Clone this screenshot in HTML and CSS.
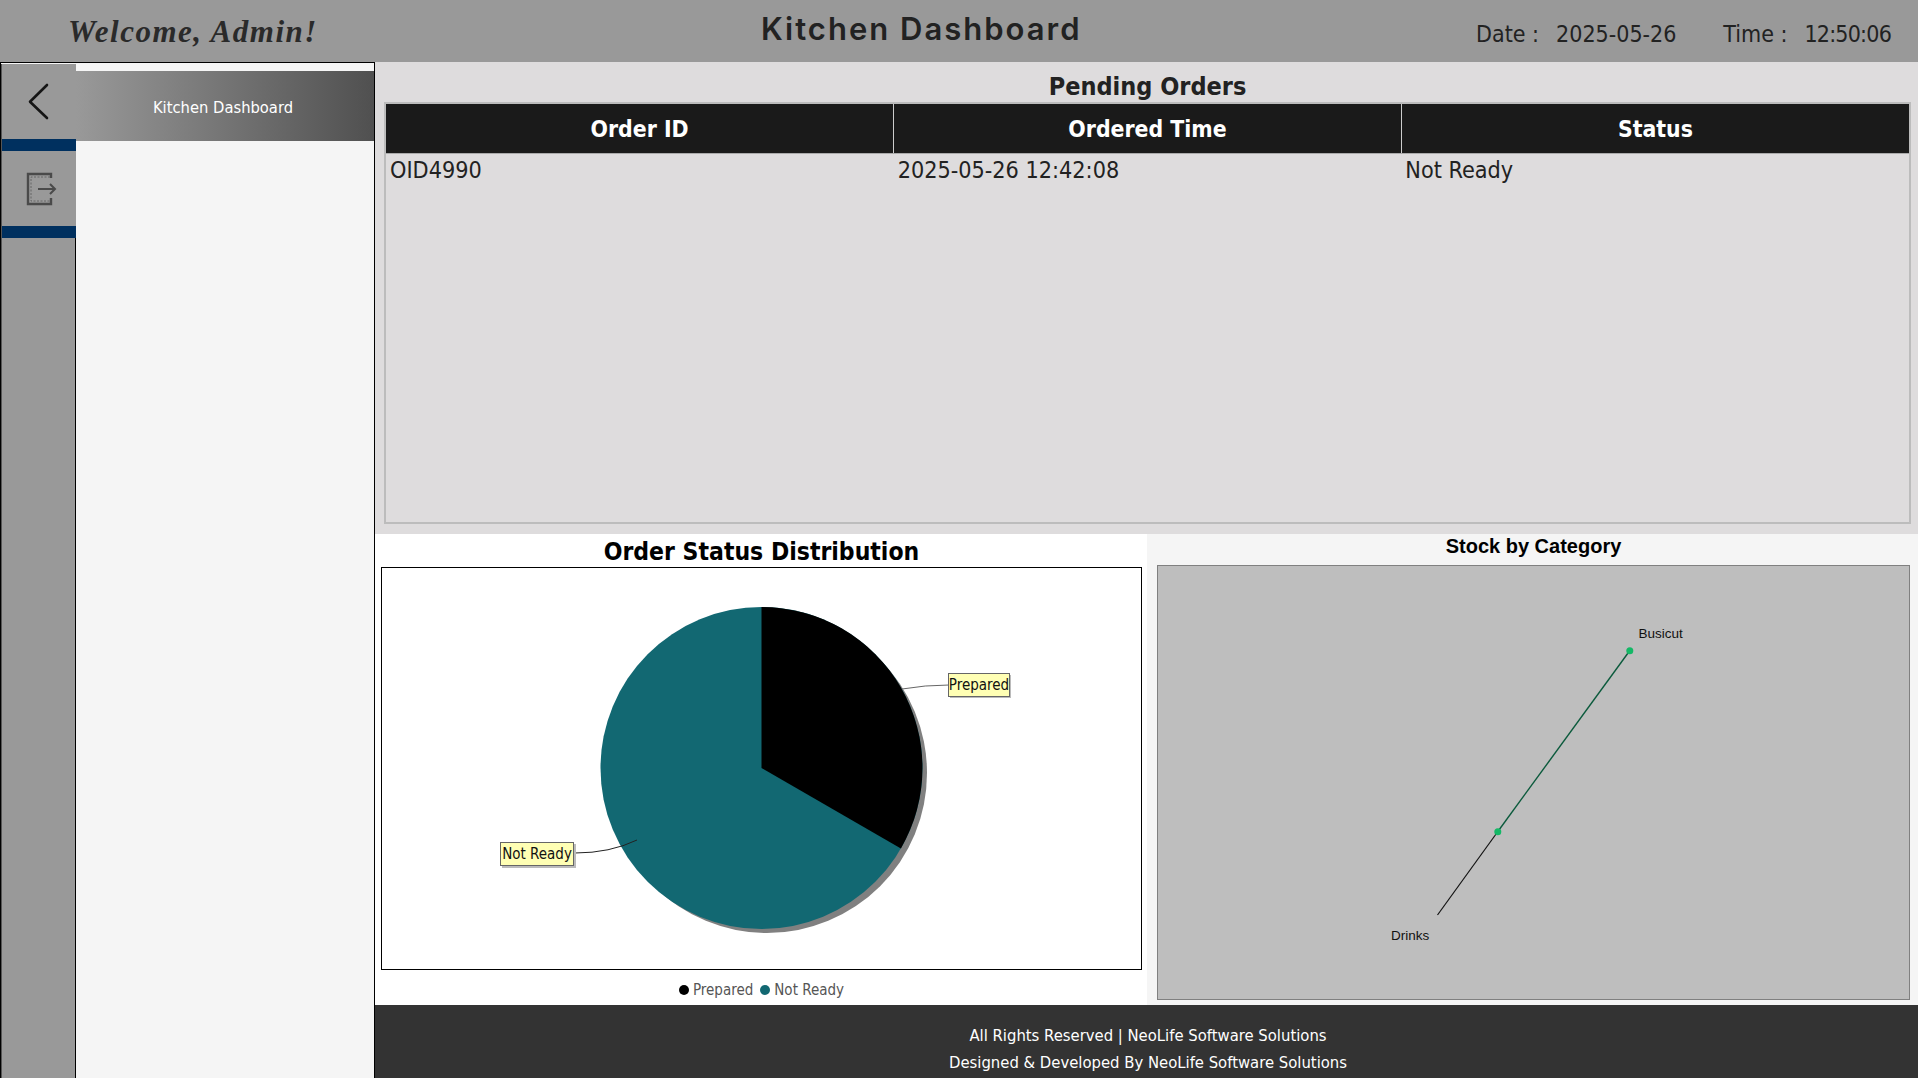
FILE: index.html
```html
<!DOCTYPE html>
<html lang="en">
<head>
    <meta charset="UTF-8">
    <title>Kitchen Dashboard</title>
    <link rel="stylesheet" href="styles.css">
</head>
<body>
    <header class="topbar">
        <div class="welcome">Welcome, Admin!</div>
        <h1 class="page-title">Kitchen Dashboard</h1>
        <div class="clock">
            <span><span class="clock-label">Date :</span>2025-05-26</span>
            <span><span class="clock-label">Time :</span><span class="clock-time">12:50:06</span></span>
        </div>
    </header>
    <div class="layout">
        <aside class="sidebar">
            <div class="rail">
                <div class="rail-btn">
                    <svg width="24" height="40" viewBox="0 0 24 40">
                        <path d="M20 3 L3 19.7 L20 36" fill="none" stroke="#151515" stroke-width="2.6" stroke-linecap="round" stroke-linejoin="round"/>
                    </svg>
                </div>
                <div class="rail-band"></div>
                <div class="rail-btn">
                    <svg class="logout-icon" width="32" height="36" viewBox="0 0 32 36">
                        <path d="M25 7 V3 H2 V33 H25 V27" fill="none" stroke="#4a4a4a" stroke-width="2.4"/>
                        <path d="M24 6 H5 V30 H24" fill="none" stroke="#666" stroke-width="1" stroke-dasharray="2 1.5"/>
                        <path d="M12 18 H29 M24 13 L29 18 L24 23" fill="none" stroke="#4a4a4a" stroke-width="2"/>
                    </svg>
                </div>
                <div class="rail-band"></div>
                <div class="rail-rest"></div>
            </div>
            <nav class="side-menu">
                <a class="side-link">Kitchen Dashboard</a>
            </nav>
        </aside>
        <main class="content">
            <section class="orders">
                <h2 class="orders-title">Pending Orders</h2>
                <div class="table-frame">
                    <table class="orders-table">
                        <thead>
                            <tr><th>Order ID</th><th>Ordered Time</th><th>Status</th></tr>
                        </thead>
                        <tbody>
                            <tr><td>OID4990</td><td>2025-05-26 12:42:08</td><td>Not Ready</td></tr>
                        </tbody>
                    </table>
                </div>
            </section>
            <section class="charts">
                <div class="chart-pie">
                    <h3 class="pie-title">Order Status Distribution</h3>
                    <div class="pie-frame">
                        <svg class="chart-svg" viewBox="382 568 759 401">
                            <circle cx="767" cy="773" r="160" fill="#808080"/>
                            <circle cx="761.5" cy="768" r="161" fill="#126872"/>
                            <path d="M761.5 768 V607 A161 161 0 0 1 900.9 848.5 Z" fill="#000"/>
                            <path d="M902 689 Q925 685 949 685" fill="none" stroke="#666"/>
                            <path d="M575 853 Q610 853 637 840" fill="none" stroke="#222"/>
                            <rect x="950" y="675" width="61" height="23" fill="#bbb"/>
                            <rect x="948.5" y="673.5" width="61" height="23" fill="#ffffb4" stroke="#666"/>
                            <text class="pie-label" x="979" y="690" text-anchor="middle">Prepared</text>
                            <rect x="502" y="844" width="74" height="24" fill="#bbb"/>
                            <rect x="500.5" y="842.5" width="73" height="23" fill="#ffffb4" stroke="#666"/>
                            <text class="pie-label" x="537" y="859" text-anchor="middle">Not Ready</text>
                        </svg>
                    </div>
                    <div class="legend">
                        <span class="dot dot-black"></span><span>Prepared</span>
                        <span class="dot dot-teal"></span><span>Not Ready</span>
                    </div>
                </div>
                <div class="chart-stock">
                    <h3 class="stock-title">Stock by Category</h3>
                    <div class="stock-frame">
                        <svg class="chart-svg" viewBox="1158 566 750 433">
                            <path d="M1437 915 L1497 832" stroke="#111" stroke-width="1.2" fill="none"/>
                            <path d="M1497 832 L1629 651" stroke="#0b5a3c" stroke-width="1.4" fill="none"/>
                            <circle cx="1497.3" cy="831.7" r="3.5" fill="#14b866"/>
                            <circle cx="1629.3" cy="650.7" r="3.5" fill="#14b866"/>
                            <text class="stock-label" x="1638" y="638">Busicut</text>
                            <text class="stock-label" x="1390.5" y="940">Drinks</text>
                        </svg>
                    </div>
                </div>
            </section>
            <footer class="footer">
                <p>All Rights Reserved | NeoLife Software Solutions</p>
                <p>Designed &amp; Developed By NeoLife Software Solutions</p>
            </footer>
        </main>
    </div>
</body>
</html>
```

FILE: styles.css
```css
* {
    box-sizing: border-box;
}
body {
    margin: 0;
    height: 1078px;
    overflow: hidden;
    background-color: #f5f5f5;
    font-family: "DejaVu Sans", sans-serif;
    font-stretch: condensed;
    color: #222;
}
.topbar {
    height: 62px;
    background-color: #999;
    display: flex;
    align-items: center;
    position: relative;
}
.welcome {
    margin-left: 68px;
    margin-top: 1px;
    font-family: "Liberation Serif", serif;
    font-stretch: normal;
    font-style: italic;
    font-weight: bold;
    font-size: 31px;
    letter-spacing: 1.5px;
    color: #2a2a2a;
}
.page-title {
    position: absolute;
    left: 761px;
    top: 10px;
    margin: 0;
    font-family: "Inter", sans-serif;
    font-stretch: normal;
    font-weight: 600;
    font-size: 31px;
    letter-spacing: 2px;
    color: #222;
}
.clock {
    margin-left: auto;
    margin-right: 27px;
    margin-top: 5px;
    display: flex;
    gap: 47px;
    font-size: 23px;
    color: #222;
}
.clock-label {
    margin-right: 17px;
}
.clock-time {
    letter-spacing: -0.8px;
}
.layout {
    display: flex;
    height: 1016px;
}
.sidebar {
    width: 375px;
    flex-shrink: 0;
    display: flex;
    border: 1px solid #000;
    border-bottom: none;
    background-color: #f5f5f5;
}
.rail {
    width: 75px;
    flex-shrink: 0;
    margin-top: 1px;
    display: flex;
    flex-direction: column;
    background-color: #999;
    border-left: 1px solid #555;
}
.rail-btn {
    height: 75px;
    display: flex;
    align-items: center;
    justify-content: center;
}
.logout-icon {
    margin-left: 5px;
}
.rail-band {
    height: 12px;
    background-color: #00305f;
}
.rail-rest {
    flex-grow: 1;
    border-right: 1px solid #000;
}
.side-menu {
    flex-grow: 1;
    padding-top: 8px;
}
.side-link {
    height: 70px;
    display: flex;
    align-items: center;
    justify-content: center;
    padding: 2px 4px 0 0;
    background: linear-gradient(to right, #999, #505050);
    color: #fff;
    font-size: 16.4px;
}
.content {
    flex-grow: 1;
    display: flex;
    flex-direction: column;
    min-width: 0;
}
.orders {
    height: 472px;
    background-color: #dedcdd;
    padding: 0 7px 10px 9px;
    display: flex;
    flex-direction: column;
}
.orders-title {
    height: 40px;
    margin: 0;
    padding-top: 9px;
    text-align: center;
    font-size: 25px;
    line-height: 32px;
    color: #222;
}
.table-frame {
    flex-grow: 1;
    border: 2px solid #bcbcbc;
}
.orders-table {
    width: 100%;
    border-collapse: collapse;
    table-layout: fixed;
}
.orders-table th {
    height: 49px;
    padding-top: 2px;
    background-color: #1a1a1a;
    border-left: 1px solid #ccc;
    border-bottom: 1px solid #aaa;
    color: #fff;
    font-size: 22.8px;
    font-weight: bold;
}
.orders-table th:first-child {
    border-left: none;
}
.orders-table td {
    padding: 2px 4px;
    font-size: 23.2px;
    color: #222;
}
.charts {
    height: 471px;
    display: grid;
    grid-template-columns: 772px 1fr;
}
.chart-pie {
    background-color: #fff;
    padding: 0 5px 0 6px;
    display: flex;
    flex-direction: column;
}
.pie-title {
    height: 33px;
    margin: 0;
    text-align: center;
    font-size: 24.5px;
    line-height: 35px;
    color: #000;
}
.pie-frame {
    width: 761px;
    height: 403px;
    flex-shrink: 0;
    border: 1px solid #000;
}
.chart-svg {
    display: block;
    width: 100%;
    height: 100%;
}
.pie-label {
    font-size: 15px;
    fill: #111;
}
.legend {
    flex-grow: 1;
    display: flex;
    align-items: center;
    justify-content: center;
    gap: 4px;
    padding-top: 5px;
    font-size: 15px;
    color: #555;
}
.dot {
    width: 10px;
    height: 10px;
    border-radius: 50%;
}
.dot-black {
    background-color: #000;
}
.dot-teal {
    background-color: #126872;
    margin-left: 3px;
}
.chart-stock {
    background-color: #f5f5f5;
    padding: 0 8px 5px 10px;
    display: flex;
    flex-direction: column;
}
.stock-title {
    height: 31px;
    margin: 0;
    text-align: center;
    font-family: "Liberation Sans", sans-serif;
    font-stretch: normal;
    font-size: 20px;
    line-height: 25px;
    color: #000;
}
.stock-frame {
    height: 435px;
    background-color: #bebebe;
    border: 1px solid #808080;
}
.stock-label {
    font-family: "Liberation Sans", sans-serif;
    font-stretch: normal;
    font-size: 13.5px;
    fill: #111;
}
.footer {
    height: 73px;
    background-color: #333;
    color: #fff;
    text-align: center;
    font-size: 16.5px;
    padding: 21px 0 0 3px;
}
.footer p {
    margin: 0 0 7px;
    line-height: 20px;
}
```
